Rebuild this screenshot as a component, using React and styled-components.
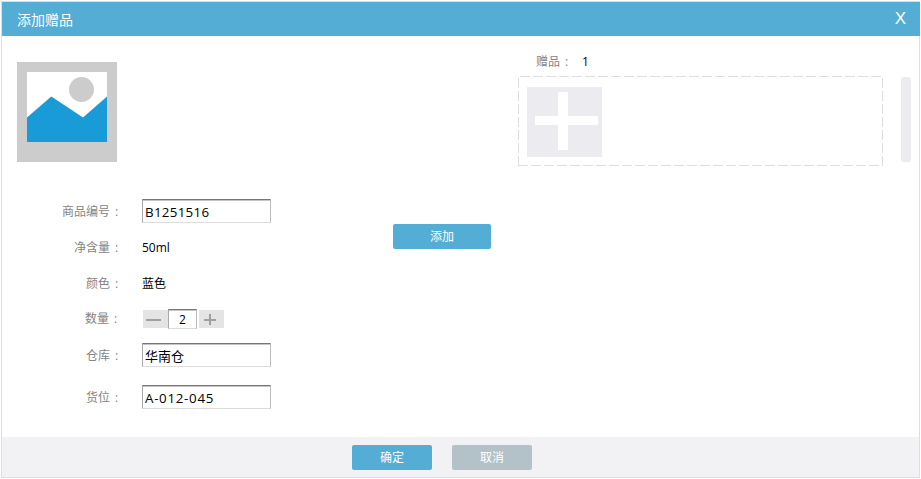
import React from 'react';
import styled, { createGlobalStyle } from 'styled-components';

const GlobalStyle = createGlobalStyle`
  * { box-sizing: border-box; }
  body {
    margin: 0;
    background: #fff;
    font: 12px/16px "Open Sans", "Noto Sans CJK SC", sans-serif;
    color: #000;
  }
  button, input { font-family: inherit; margin: 0; }
`;

const Dialog = styled.section`
  display: flex;
  flex-direction: column;
  width: 919px;
  height: 477px;
  margin: 1px;
  border: 1px solid #dddde3;
`;

const Header = styled.header`
  display: flex;
  flex: none;
  align-items: center;
  justify-content: space-between;
  height: 34px;
  margin-right: -1px;
  padding: 0 14px 0 15px;
  background: #54add4;
  color: #fff;
`;

const Title = styled.h1`
  margin: 0;
  padding-top: 2px;
  font-size: 14px;
  font-weight: 400;
  line-height: 32px;
`;

const Close = styled.button`
  padding: 0;
  border: 0;
  background: none;
  color: #fff;
  font-family: "Liberation Sans", sans-serif;
  font-size: 17px;
  line-height: 34px;
`;

const Body = styled.main`
  display: grid;
  grid-template-columns: 391px 125px 1fr;
  flex: 1;
`;

const Product = styled.div`
  padding: 26px 0 0 15px;
`;

const Picture = styled.svg`
  display: block;
  width: 100px;
  height: 100px;
`;

const Fields = styled.div`
  padding-top: 37px;
`;

const Row = styled.div`
  display: grid;
  grid-template-columns: 105px auto;
  column-gap: 20px;
  align-items: start;
  height: ${(p) => p.$height}px;
`;

const Label = styled.label`
  display: flex;
  justify-content: flex-end;
  padding-top: ${(p) => p.$top ?? 5}px;
  padding-right: ${(p) => p.$right ?? 0}px;
  color: #848484;
  white-space: nowrap;
`;

const Colon = styled.span`
  width: 12px;
  text-indent: 5px;
`;

const Value = styled.span`
  padding-top: 5px;
`;

const TextInput = styled.input`
  width: ${(p) => p.$width ?? 129}px;
  height: ${(p) => p.$height ?? 24}px;
  padding: ${(p) => p.$pad ?? '3px 2px 1px'};
  border: 1px solid;
  border-color: #777 #bdbdbd #dcdcdc #aaa;
  border-radius: 0;
  box-shadow: inset 0 1px #c4c4c4;
  outline: 0;
  background: #fff;
  color: #000;
  font-size: ${(p) => p.$size ?? 13.33}px;
  letter-spacing: ${(p) => p.$tracking ?? 0}px;
  text-align: ${(p) => p.$align ?? 'left'};
`;

const Stepper = styled.div`
  display: flex;
  align-items: center;
  width: 81px;
  height: 20px;
  margin-left: 1px;
`;

const StepButton = styled.button`
  display: block;
  width: 25px;
  height: 18px;
  margin-left: ${(p) => p.$gap ?? 0}px;
  padding: 0;
  border: 0;
  background: #e4e4e4;
  svg { display: block; }
`;

const Button = styled.button`
  width: ${(p) => p.$width ?? 80}px;
  height: 25px;
  padding: 1px 0 0;
  border: 0;
  border-radius: 2px;
  background: ${(p) => (p.$muted ? '#b3c2c9' : '#54add4')};
  color: #fff;
  font-size: 12px;
  line-height: 24px;
`;

const Action = styled.div`
  padding-top: 188px;
`;

const Gifts = styled.div`
  padding-top: 18px;
`;

const GiftHeading = styled.div`
  display: flex;
  height: 22px;
  padding-left: 18px;
`;

const GiftLabel = styled.span`
  display: flex;
  width: 46px;
  color: #848484;
`;

const GiftArea = styled.div`
  display: flex;
  justify-content: space-between;
  width: 393px;
`;

const h = 'repeating-linear-gradient(90deg, #dddde3 0 10px, transparent 10px 13px)';
const v = 'repeating-linear-gradient(180deg, #dddde3 0 10px, transparent 10px 13px)';

const DropZone = styled.div`
  width: 365px;
  height: 90px;
  padding: 11px 9px;
  background: ${h} 2px 0 / 361px 1px no-repeat,
    ${h} 0 89px / 365px 1px no-repeat,
    ${v} 0 2px / 1px 88px no-repeat,
    ${v} 364px 2px / 1px 88px no-repeat;
`;

const AddTile = styled.svg`
  display: block;
  width: 75px;
  height: 70px;
`;

const ScrollThumb = styled.div`
  width: 10px;
  height: 85px;
  margin-top: 1px;
  border-radius: 3px;
  background: #ebebf0;
`;

const Footer = styled.footer`
  display: flex;
  flex: none;
  gap: 20px;
  height: 40px;
  padding: 8px 0 0 350px;
  background: #f2f2f5;
`;

function Field({ label, height, top, right, children }) {
  return (
    <Row $height={height}>
      <Label $top={top} $right={right}>{label}<Colon>:</Colon></Label>
      {children}
    </Row>
  );
}

export default function App() {
  return (
    <>
      <GlobalStyle />
      <Dialog>
        <Header>
          <Title>添加赠品</Title>
          <Close aria-label="关闭">X</Close>
        </Header>
        <Body>
          <Product>
            <Picture viewBox="0 0 100 100">
              <path fill="#ccc" d="M0 0h100v100H0z" />
              <path fill="#fff" d="M10 10h80v70H10z" />
              <circle cx="64.5" cy="27.5" r="12.5" fill="#ccc" />
              <path fill="#189bd7" d="M10 55.5 34.3 34.5 66 55.5 90 34.5V80H10z" />
            </Picture>
            <Fields>
              <Field label="商品编号" height={36}>
                <TextInput $tracking={0.3} defaultValue="B1251516" />
              </Field>
              <Field label="净含量" height={36}><Value>50ml</Value></Field>
              <Field label="颜色" height={38}><Value>蓝色</Value></Field>
              <Field label="数量" height={34} top={2} right={1}>
                <Stepper>
                  <StepButton aria-label="减少">
                    <svg width="25" height="18"><path fill="#a0a0a0" d="M3 9h15v2H3z" /></svg>
                  </StepButton>
                  <TextInput $width={29} $height={20} $pad="1px 1px 0" $size={12} $align="center" defaultValue="2" />
                  <StepButton aria-label="增加" $gap={2}>
                    <svg width="25" height="18"><path fill="#a0a0a0" d="M5 9h12v2H5zM10 4h2v11h-2z" /></svg>
                  </StepButton>
                </Stepper>
              </Field>
              <Field label="仓库" height={42}><TextInput $size={13} $pad="2px 2px 1px" defaultValue="华南仓" /></Field>
              <Field label="货位" height={24}><TextInput $tracking={0.7} defaultValue="A-012-045" /></Field>
            </Fields>
          </Product>
          <Action><Button $width={98}>添加</Button></Action>
          <Gifts>
            <GiftHeading>
              <GiftLabel>赠品<Colon>:</Colon></GiftLabel>
              <span>1</span>
            </GiftHeading>
            <GiftArea>
              <DropZone>
                <AddTile viewBox="0 0 75 70">
                  <path fill="#ebebf0" d="M0 0h75v70H0z" />
                  <path fill="#fff" d="M31 5h10v58H31zM8 29h63v9H8z" />
                </AddTile>
              </DropZone>
              <ScrollThumb />
            </GiftArea>
          </Gifts>
        </Body>
        <Footer>
          <Button>确定</Button>
          <Button $muted>取消</Button>
        </Footer>
      </Dialog>
    </>
  );
}
